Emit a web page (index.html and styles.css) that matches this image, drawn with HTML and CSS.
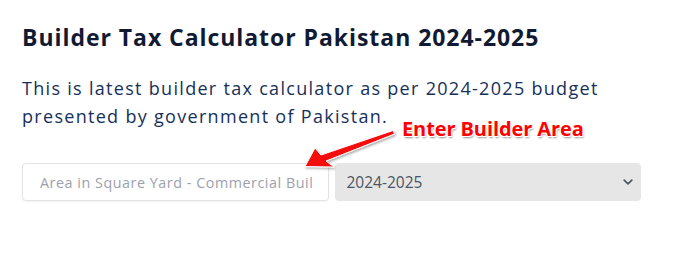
FILE: index.html
```html
<!DOCTYPE html>
<html lang="en">
<head>
<meta charset="utf-8">
<title>Builder Tax Calculator Pakistan 2024-2025</title>
<link rel="stylesheet" href="styles.css">
</head>
<body>
<main class="page">
  <h1 class="title">Builder Tax Calculator Pakistan 2024-2025</h1>
  <p class="intro">This is latest builder tax calculator as per 2024-2025 budget presented by government of Pakistan.</p>
  <div class="form-row">
    <input class="area-input" type="text" placeholder="Area in Square Yard - Commercial Building">
    <div class="select-wrap">
      <select class="year-select">
        <option>2024-2025</option>
      </select>
      <svg class="chev" width="10" height="6" viewBox="0 0 10 6"><path d="M1.2 1.2l3.8 3.6 3.8-3.6" fill="none" stroke="#4b5563" stroke-width="1.7" stroke-linecap="round" stroke-linejoin="round"/></svg>
    </div>
  </div>
  <div class="annotation">Enter Builder Area</div>
  <svg class="arrow" width="679" height="266" viewBox="0 0 679 266">
    <defs>
      <filter id="sh" x="-20%" y="-20%" width="140%" height="140%">
        <feDropShadow dx="1" dy="1.5" stdDeviation="1" flood-color="#000" flood-opacity="0.35"/>
      </filter>
    </defs>
    <polygon points="393,130.5 394.5,134 326,161 334,167 305,166.5 315,148 321,155" fill="#f50a0a" stroke="#fff" stroke-width="1" stroke-linejoin="round" filter="url(#sh)"/>
  </svg>
</main>
</body>
</html>
```
FILE: styles.css
```css
html, body {
  margin: 0;
  padding: 0;
  background: #ffffff;
}
.page {
  position: relative;
  width: 679px;
  height: 266px;
  box-sizing: border-box;
  padding: 21px 22px 0 22px;
  font-family: "Open Sans", "Noto Sans", sans-serif;
}
.title {
  margin: 0;
  font-size: 23px;
  line-height: 32px;
  font-weight: 700;
  color: #111a33;
  letter-spacing: 0.95px;
}
.intro {
  margin: 21px 0 0 0;
  width: 600px;
  font-size: 18px;
  line-height: 28px;
  color: #16305a;
  letter-spacing: 1.3px;
}
.form-row {
  display: grid;
  grid-template-columns: minmax(0, 1fr) minmax(0, 1fr);
  gap: 6px;
  margin-top: 33px;
  width: 619px;
}
.area-input {
  width: 100%;
  min-width: 0;
  box-sizing: border-box;
  height: 38px;
  padding: 0 16px 0 17px;
  border: 1px solid #e3e3e3;
  border-radius: 4px;
  background: #fff;
  font-family: "Open Sans", sans-serif;
  font-size: 14.3px;
  letter-spacing: 0.55px;
  color: #333;
  box-shadow: 0 1px 2px rgba(0,0,0,0.05);
}
.area-input::placeholder {
  color: #9ca1ad;
}
.select-wrap {
  position: relative;
  min-width: 0;
}
.year-select {
  appearance: none;
  -webkit-appearance: none;
  width: 100%;
  box-sizing: border-box;
  height: 38px;
  padding: 0 12px;
  border: none;
  border-radius: 4px;
  background: #e6e6e6;
  font-family: "Open Sans", sans-serif;
  font-size: 15.5px;
  color: #4b5563;
}
.chev {
  position: absolute;
  right: 8px;
  top: 16px;
}
.annotation {
  position: absolute;
  left: 402px;
  top: 116px;
  font-family: "Open Sans", sans-serif;
  font-weight: 700;
  font-size: 20px;
  line-height: 26px;
  color: #ff0000;
  letter-spacing: -0.1px;
  text-shadow: -1px -1px 0 #fff, 1px -1px 0 #fff, -1px 1px 0 #fff, 1px 1px 0 #fff, 1px 2px 2px rgba(0,0,0,0.45);
}
.arrow {
  position: absolute;
  left: 0;
  top: 0;
  pointer-events: none;
}
```
